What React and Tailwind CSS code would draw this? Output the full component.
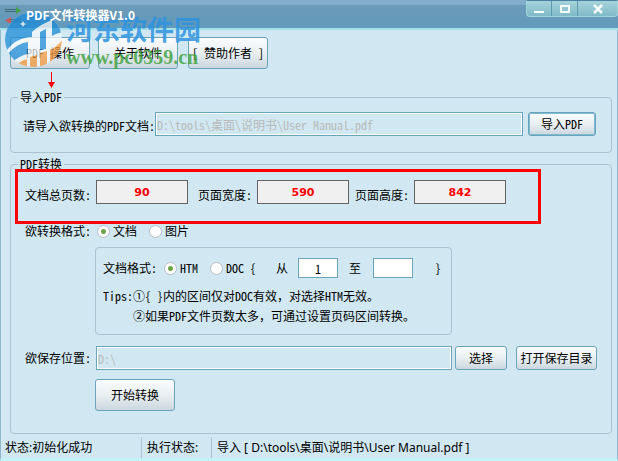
import React, { useState } from "react";

function Btn({ className = "", children }) {
  return (
    <button
      type="button"
      className={`shrink-0 rounded-[3px] border border-[#6ba3bb] bg-linear-to-b from-[#fbfdfd] via-[#e9eff2] to-[#cbd7de] whitespace-nowrap hover:brightness-105 ${className}`}
    >
      {children}
    </button>
  );
}

function Radio({ label, ...props }) {
  return (
    <label className="flex items-center gap-[3px]">
      <input
        type="radio"
        className="size-[13px] appearance-none rounded-full border border-[#b4bdc6] bg-white checked:bg-[radial-gradient(circle,#6da544_0_2px,#ffffff_3px)]"
        {...props}
      />
      {label}
    </label>
  );
}

function Stat({ id, label, value, labelClass }) {
  return (
    <>
      <label htmlFor={id} className={`pt-[6px] ${labelClass}`}>{label}</label>
      <input
        id={id}
        readOnly
        value={value}
        className="h-6 w-[92px] border border-[#646464] bg-[#f0f0f0] text-center font-['DejaVu_Sans',sans-serif] text-[11px] font-bold text-[#ff0000]"
      />
    </>
  );
}

// full-width comma, kept out of the half-width font feature
function Comma() {
  return <span className="[font-feature-settings:normal]">，</span>;
}

function TitleBar() {
  return (
    <header className="flex h-[30px] items-start border-b-2 border-b-[#a4e0e8] bg-linear-to-b from-[#82aecb] from-15% via-[#6b9ab8] via-20% to-[#629abb]">
      <svg className="mt-[5px] ml-[5px] h-[20px] w-4" viewBox="0 0 16 20">
        <path d="M0 4.5h11M0 6.5h11M6 14.5h10M6 16.5h10" stroke="#416b7d" />
        <path d="M11 2v7l5-3.500z" fill="#43a047" />
        <path d="M6 12v7l-6-3.500z" fill="#c95c5c" />
      </svg>
      <h1 className="relative z-10 mt-[6px] ml-[5px] flex-1 text-xs leading-[18px] font-bold text-white">PDF文件转换器V1.0</h1>
      <div className="flex h-[17px] w-[92px] rounded-b-[4px] border border-[#a0d5dc] border-t-[#4881a5] bg-linear-to-b from-[#a6d3db] to-[#80bac8]">
        <button type="button" aria-label="最小化" className="flex w-[25px] items-center justify-center border-r border-[#5a9bb0]">
          <svg className="h-3 w-3" viewBox="0 0 12 12"><path d="M1 9h10" stroke="#f4fafa" strokeWidth="2" /></svg>
        </button>
        <button type="button" aria-label="最大化" className="flex w-[26px] items-center justify-center border-r border-[#5a9bb0]">
          <svg className="h-3 w-3" viewBox="0 0 12 12"><path d="M2 3h8v6H2z" fill="none" stroke="#f4fafa" strokeWidth="2" /></svg>
        </button>
        <button type="button" aria-label="关闭" className="flex flex-1 items-center justify-center">
          <svg className="h-3 w-3" viewBox="0 0 12 12"><path d="M2 2l8 8M10 2l-8 8" stroke="#f4fafa" strokeWidth="2.5" /></svg>
        </button>
      </div>
    </header>
  );
}

function Watermark() {
  return (
    <div className="pointer-events-none absolute top-3 left-[5px] flex">
      <svg className="h-14 w-[58px] opacity-75" viewBox="0 0 58 56">
        <defs>
          <clipPath id="disc"><ellipse cx="28.500" cy="27.500" rx="28.500" ry="27.500" /></clipPath>
        </defs>
        <g clipPath="url(#disc)">
          <path d="M0 0h58v56H0z" fill="#f4f8fa" />
          <path d="M0 32V0h58v20c-4 1-8 2-11 4V8C39 11 32 15 27 20v5C17 25 8 30 2 38z" fill="#1e8bd6" />
          <path d="M3 42c6-7 12-11 20-12v12c-6 1-11 4-16 8z" fill="#1e8bd6" />
          <path d="M35 20l6-3v20l-6 1z" fill="#1e8bd6" />
          <path d="M10 54c4-4 8-6 12-7v9H10zM25 45l7-2v13h-7zM35 41l7-2v17h-7zM45 38c5-2 9-6 13-11v29H45z" fill="#f39a3d" />
        </g>
        <path d="M18 9l1 2 2 1-2 1-1 2-1-2-2-1 2-1z" fill="#ffffff" />
      </svg>
      <div className="mt-px ml-[3px]">
        <p className="text-[27px] leading-8 font-bold text-[#2d93df]/85">河东软件园</p>
        <p className="font-['Liberation_Serif',serif] text-xl leading-6 font-bold text-[#45a544]/85">www.pc0359.cn</p>
      </div>
    </div>
  );
}

export default function App() {
  const [format, setFormat] = useState("doc");
  const [docType, setDocType] = useState("htm");
  const [from, setFrom] = useState("1");
  const [to, setTo] = useState("");

  return (
    <div className="relative flex min-h-screen flex-col bg-[#d1e8f2] font-['Noto_Sans_CJK_SC',sans-serif] text-xs text-black">
      <TitleBar />
      <main className="flex-1 border-x border-[#8fb9cb] pt-[7px] pr-[5px] pl-[9px] [font-feature-settings:'hwid']">
        <nav className="flex">
          <Btn className="h-8 w-20">PDF 操作</Btn>
          <Btn className="ml-2 h-8 w-20">关于软件</Btn>
          <Btn className="ml-[10px] h-8 w-20">[ 赞助作者 ]</Btn>
        </nav>
        <svg className="mt-[3px] ml-[38px] h-4 w-[7px]" viewBox="0 0 7 16">
          <path d="M3 0h1v11H3z" fill="#ff0000" />
          <path d="M0 10h7l-3.500 6z" fill="#ff0000" />
        </svg>

        <fieldset className="mt-px min-w-0 rounded-[4px] border border-[#acc2d0] pb-4 pl-3">
          <legend className="-ml-[5px] px-[2px] leading-4">导入PDF</legend>
          <div className="flex items-center pt-[7px]">
            <label htmlFor="src" className="w-[132px] shrink-0 pt-1">请导入欲转换的PDF文档:</label>
            <input
              id="src"
              disabled
              value="D:\tools\桌面\说明书\User Manual.pdf"
              className="h-6 min-w-0 flex-1 border border-[#6ba3bb] px-px text-[#b8babb] inset-ring inset-ring-white"
            />
            <Btn className="mr-[15px] ml-[5px] h-6 w-[68px] inset-ring inset-ring-[#7dbbd5]">导入PDF</Btn>
          </div>
        </fieldset>

        <fieldset className="mt-[3px] min-w-0 rounded-[4px] border border-[#acc2d0] pb-[22px] pl-1">
          <legend className="ml-[3px] px-[2px] leading-4">PDF转换</legend>
          <div className="relative -mt-[3px] mr-[70px] flex items-center border-3 border-[#ff0000] pt-2 pb-[17px] pl-[7px]">
            <Stat id="pages" label="文档总页数:" value="90" labelClass="w-[71px]" />
            <Stat id="pw" label="页面宽度:" value="590" labelClass="ml-[10px] w-[59px]" />
            <Stat id="ph" label="页面高度:" value="842" labelClass="ml-[6px] w-[59px]" />
          </div>

          <div className="mb-[9px] flex h-[14px] items-center pl-[10px]">
            <span className="w-[72px]">欲转换格式:</span>
            <Radio name="format" label="文档" checked={format === "doc"} onChange={() => setFormat("doc")} />
            <span className="w-3" />
            <Radio name="format" label="图片" checked={format === "img"} onChange={() => setFormat("img")} />
          </div>

          <section className="ml-20 w-[357px] rounded-[4px] border border-[#acc2d0] pt-[10px] pb-2 pl-[7px]">
            <div className="flex items-center">
              <span className="w-[61px]">文档格式:</span>
              <Radio name="type" label="HTM" checked={docType === "htm"} onChange={() => setDocType("htm")} />
              <span className="w-3" />
              <Radio name="type" label="DOC" checked={docType === "doc"} onChange={() => setDocType("doc")} />
              <span className="ml-[6px] w-[26px]">{"{"}</span>
              <label htmlFor="from" className="w-[22px]">从</label>
              <input id="from" value={from} onChange={(e) => setFrom(e.target.value)} className="h-5 w-10 border border-[#6ba3bb] bg-white px-1 text-center" />
              <label htmlFor="to" className="ml-[11px] w-6">至</label>
              <input id="to" value={to} onChange={(e) => setTo(e.target.value)} className="h-5 w-10 border border-[#6ba3bb] bg-white px-1 text-center" />
              <span className="ml-[22px]">{"}"}</span>
            </div>
            <p className="mt-2 leading-5">Tips:①{"{ }"}内的区间仅对DOC有效<Comma />对选择HTM无效。</p>
            <p className="pl-[30px] leading-5">②如果PDF文件页数太多<Comma />可通过设置页码区间转换。</p>
          </section>

          <div className="mt-[11px] flex items-center pl-[10px]">
            <label htmlFor="dest" className="w-[71px] shrink-0">欲保存位置:</label>
            <input id="dest" disabled value="D:\" className="h-6 min-w-0 flex-1 border border-[#6ba3bb] px-px text-[#b8babb] inset-ring inset-ring-white" />
            <Btn className="ml-[3px] h-6 w-[52px]">选择</Btn>
            <Btn className="mr-[14px] ml-[9px] h-6 w-[81px]">打开保存目录</Btn>
          </div>
          <Btn className="mt-[9px] ml-20 h-8 w-20">开始转换</Btn>
        </fieldset>
      </main>

      <footer className="border-b border-b-[#7fb0c4]">
        <div className="flex border-x border-b-3 border-x-[#8fb9cb] border-b-[#c3f3f7] pt-1 pl-1 font-['Noto_Sans','Noto_Sans_CJK_SC',sans-serif] leading-5">
          <span className="w-[137px] border-r border-[#acc2d0]">状态:初始化成功</span>
          <span className="w-[70px] border-r border-[#acc2d0] pl-[5px]">执行状态:</span>
          <span className="pl-[5px] whitespace-nowrap">导入 [ D:\tools\桌面\说明书\User Manual.pdf ]</span>
        </div>
      </footer>
      <Watermark />
    </div>
  );
}
